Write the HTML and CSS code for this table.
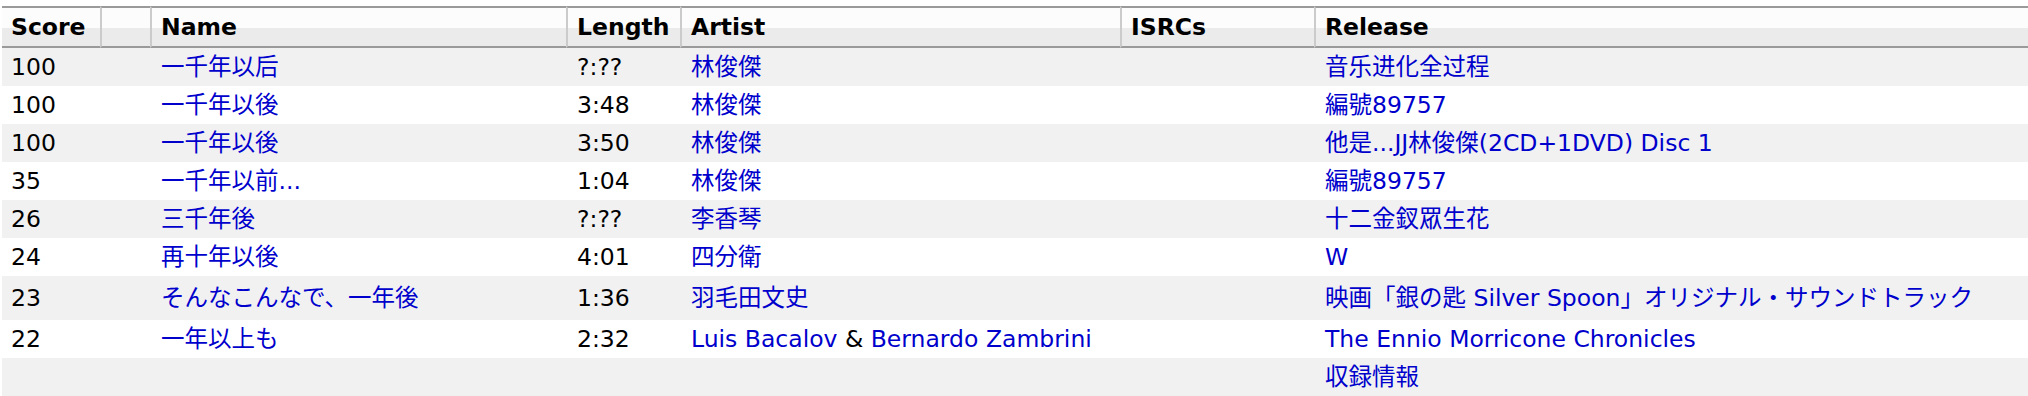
FILE: index.html
```html
<!DOCTYPE html>
<html lang="ja">
<head>
<meta charset="utf-8">
<title>Search results</title>
<link rel="stylesheet" href="styles.css">
</head>
<body>
<table class="results">
  <colgroup>
    <col class="c-score">
    <col class="c-blank">
    <col class="c-name">
    <col class="c-length">
    <col class="c-artist">
    <col class="c-isrc">
    <col class="c-release">
  </colgroup>
  <thead>
    <tr>
      <th>Score</th>
      <th></th>
      <th>Name</th>
      <th>Length</th>
      <th>Artist</th>
      <th>ISRCs</th>
      <th>Release</th>
    </tr>
  </thead>
  <tbody>
    <tr class="odd">
      <td>100</td><td></td><td><a href="#">一千年以后</a></td><td>?:??</td><td><a href="#">林俊傑</a></td><td></td><td><a href="#">音乐进化全过程</a></td>
    </tr>
    <tr class="even">
      <td>100</td><td></td><td><a href="#">一千年以後</a></td><td>3:48</td><td><a href="#">林俊傑</a></td><td></td><td><a href="#">編號89757</a></td>
    </tr>
    <tr class="odd">
      <td>100</td><td></td><td><a href="#">一千年以後</a></td><td>3:50</td><td><a href="#">林俊傑</a></td><td></td><td><a href="#">他是...JJ林俊傑(2CD+1DVD) Disc 1</a></td>
    </tr>
    <tr class="even">
      <td>35</td><td></td><td><a href="#">一千年以前...</a></td><td>1:04</td><td><a href="#">林俊傑</a></td><td></td><td><a href="#">編號89757</a></td>
    </tr>
    <tr class="odd">
      <td>26</td><td></td><td><a href="#">三千年後</a></td><td>?:??</td><td><a href="#">李香琴</a></td><td></td><td><a href="#">十二金釵眾生花</a></td>
    </tr>
    <tr class="even">
      <td>24</td><td></td><td><a href="#">再十年以後</a></td><td>4:01</td><td><a href="#">四分衛</a></td><td></td><td><a href="#">W</a></td>
    </tr>
    <tr class="odd tall">
      <td>23</td><td></td><td><a href="#">そんなこんなで、一年後</a></td><td>1:36</td><td><a href="#">羽毛田文史</a></td><td></td><td><a href="#">映画「銀の匙 Silver Spoon」オリジナル・サウンドトラック</a></td>
    </tr>
    <tr class="even">
      <td>22</td><td></td><td><a href="#">一年以上も</a></td><td>2:32</td><td><a href="#">Luis Bacalov</a> &amp; <a href="#">Bernardo Zambrini</a></td><td></td><td><a href="#">The Ennio Morricone Chronicles</a></td>
    </tr>
    <tr class="odd">
      <td></td><td></td><td></td><td></td><td></td><td></td><td><a href="#">収録情報</a></td>
    </tr>
  </tbody>
</table>
</body>
</html>
```
FILE: styles.css
```css
html, body {
  background: #ffffff;
}

body {
  margin: 0;
  padding: 6px 0 0 2px;
  font-family: "DejaVu Sans", "Noto Sans CJK JP", sans-serif;
  font-size: 23.5px;
  color: #000000;
}

.results {
  border-collapse: separate;
  border-spacing: 0;
  table-layout: fixed;
  width: 2026px;
}

.c-score { width: 98px; }
.c-blank { width: 50px; }
.c-name { width: 416px; }
.c-length { width: 114px; }
.c-artist { width: 440px; }
.c-isrc { width: 194px; }
.c-release { width: 714px; }

.results th {
  text-align: left;
  font-weight: bold;
  line-height: 38px;
  padding: 0 0 0 9px;
  border-top: 2px solid #9a9a9a;
  border-bottom: 2px solid #9a9a9a;
  border-left: 2px solid #cbcbcb;
  background: linear-gradient(to bottom, #fcfcfc 0, #fcfcfc 20px, #ebebeb 20px, #ebebeb 100%);
  white-space: nowrap;
  overflow: hidden;
}

.results th:first-child {
  border-left: 0;
}

.results td {
  line-height: 38px;
  padding: 0 0 0 9px;
  border-left: 2px solid transparent;
  white-space: nowrap;
  overflow: hidden;
  vertical-align: middle;
}

.results td:first-child {
  border-left: 0;
}

.results tr.tall td {
  line-height: 44px;
}

.results tr.odd td {
  background: #f1f1f1;
}

.results tr.even td {
  background: #ffffff;
}

.results a {
  color: #0000cc;
  text-decoration: none;
}
```
